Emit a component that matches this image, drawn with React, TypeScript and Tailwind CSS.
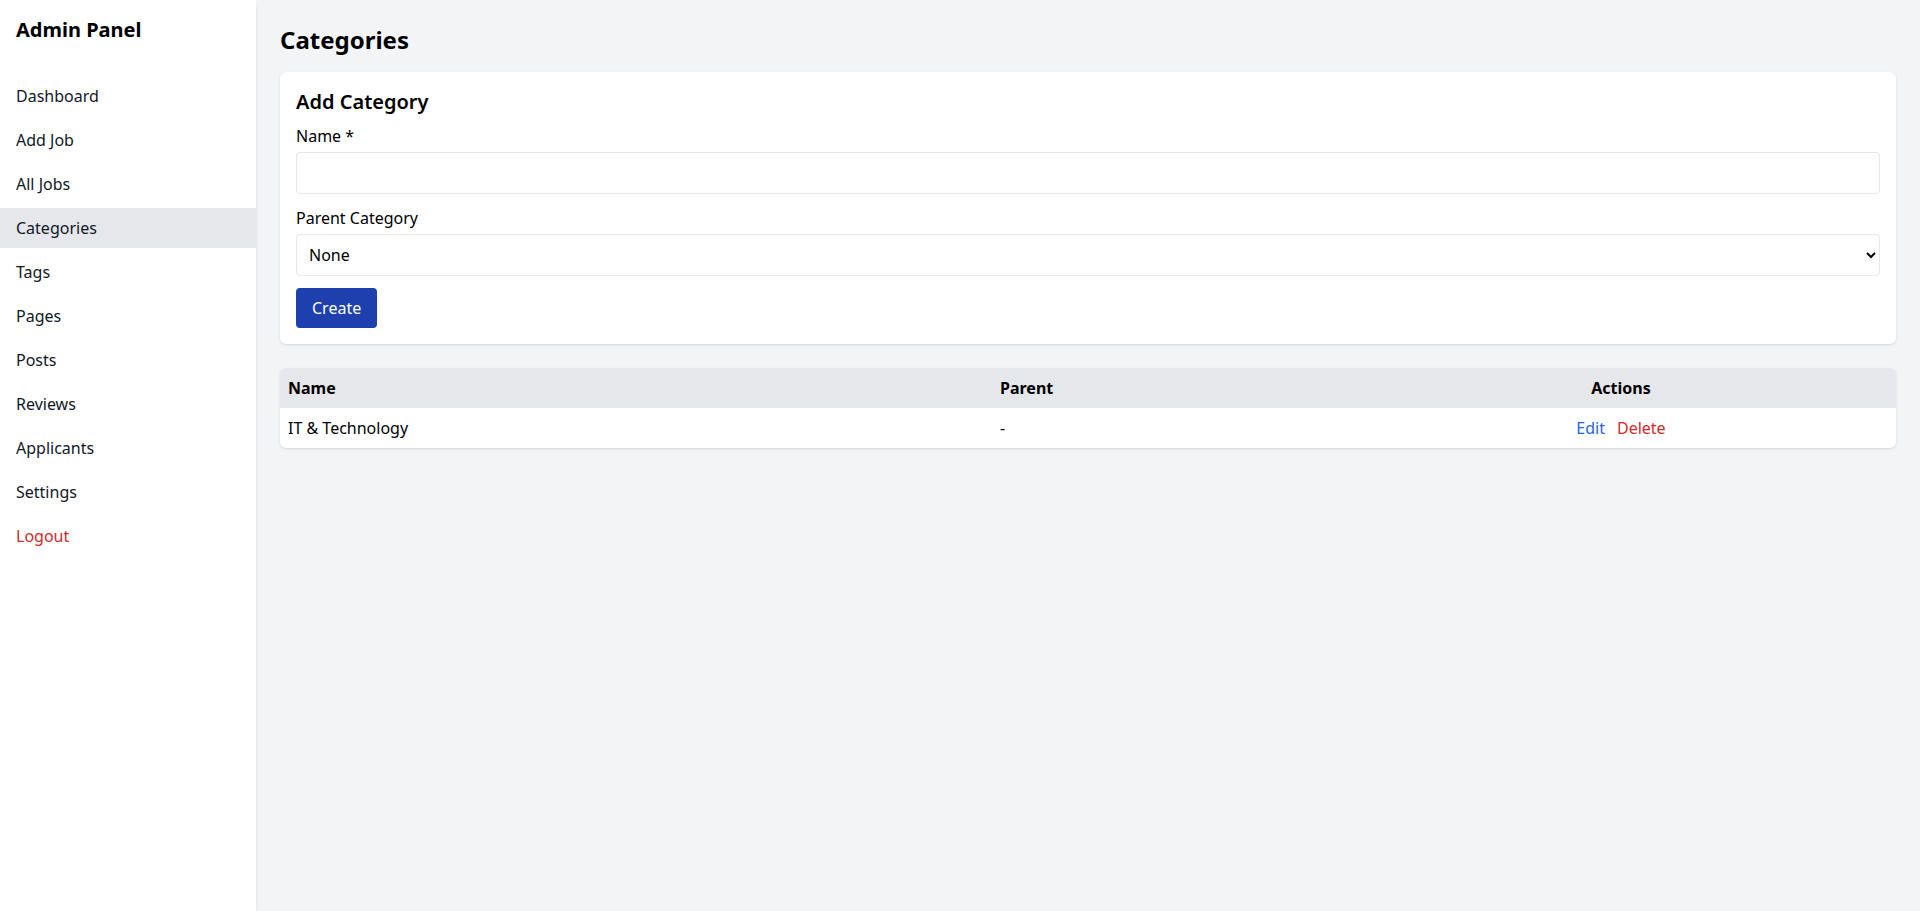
import React from "react";

const navItems = [
  "Dashboard",
  "Add Job",
  "All Jobs",
  "Categories",
  "Tags",
  "Pages",
  "Posts",
  "Reviews",
  "Applicants",
  "Settings",
];

function Sidebar() {
  return (
    <aside className="w-64 shrink-0 bg-white shadow-md">
      <div className="p-4">
        <h2 className="mb-8 text-xl font-bold">Admin Panel</h2>
      </div>
      <nav className="-mt-4 space-y-1">
        {navItems.map((item) => (
          <a
            key={item}
            href="#"
            className={`block px-4 py-2 text-gray-900 ${
              item === "Categories" ? "bg-[#e5e7eb]" : "hover:bg-gray-100"
            }`}
          >
            {item}
          </a>
        ))}
        <button className="block w-full px-4 py-2 text-left text-[#d02a2a]">
          Logout
        </button>
      </nav>
    </aside>
  );
}

export default function App() {
  return (
    <div
      className="flex min-h-screen bg-[#f3f4f6] text-black"
      style={{ fontFamily: '"Noto Sans", "Open Sans", sans-serif' }}
    >
      <Sidebar />
      <main className="flex-1 p-6">
        <h1 className="mb-4 text-2xl font-bold">Categories</h1>

        <form className="mb-6 rounded-md bg-white p-4 shadow">
          <h2 className="mb-2 text-xl font-semibold">Add Category</h2>
          <div className="mb-3">
            <label className="block">Name *</label>
            <input
              type="text"
              className="mt-1 block w-full rounded border border-[#e5e7eb] p-2"
            />
          </div>
          <div className="mb-3">
            <label className="block">Parent Category</label>
            <select className="mt-1 block w-full rounded border border-[#e5e7eb] bg-white p-2">
              <option>None</option>
            </select>
          </div>
          <button
            type="button"
            className="rounded bg-[#1e40af] px-4 py-2 text-white"
          >
            Create
          </button>
        </form>

        <div className="overflow-hidden rounded-md bg-white shadow">
          <table className="w-full table-fixed">
            <thead className="bg-[#e5e7eb]">
              <tr>
                <th className="w-[712px] px-2 py-2 text-left font-bold">Name</th>
                <th className="w-[354px] px-2 py-2 text-left font-bold">Parent</th>
                <th className="px-2 py-2 text-center font-bold">Actions</th>
              </tr>
            </thead>
            <tbody>
              <tr>
                <td className="px-2 py-2">IT &amp; Technology</td>
                <td className="px-2 py-2">-</td>
                <td className="px-2 py-2 text-center">
                  <button className="mr-3 text-[#2563eb]">Edit</button>
                  <button className="text-[#d02a2a]">Delete</button>
                </td>
              </tr>
            </tbody>
          </table>
        </div>
      </main>
    </div>
  );
}
